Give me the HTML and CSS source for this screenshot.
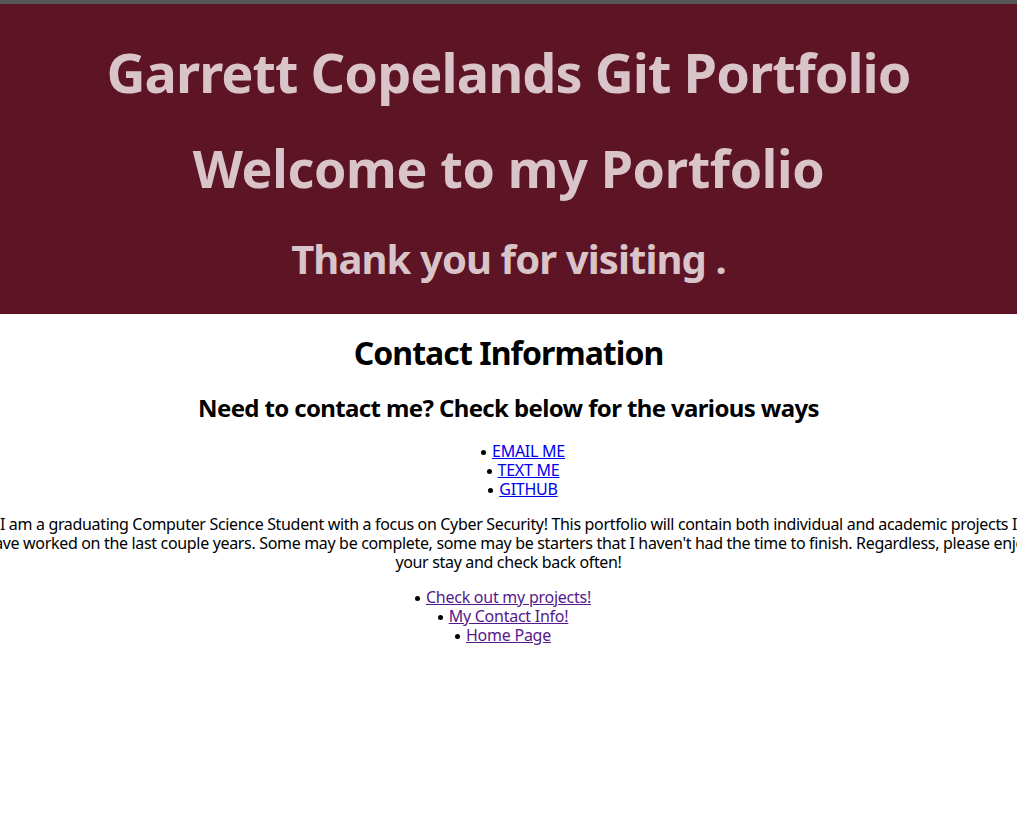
FILE: index.html
```html
<!DOCTYPE html>
<html lang="en">
<head>
<meta charset="utf-8">
<title>Garrett Copelands Git Portfolio</title>
<link rel="stylesheet" href="styles.css">
</head>
<body>
<header class="banner">
  <h1 class="title">Garrett Copelands Git Portfolio</h1>
  <h1 class="welcome">Welcome to my Portfolio</h1>
  <h2 class="thanks">Thank you for visiting .</h2>
</header>
<main class="content">
  <h1 class="section-title">Contact Information</h1>
  <h2 class="section-sub">Need to contact me? Check below for the various ways</h2>
  <ul class="bullets contact-list">
    <li><span class="item"><a class="link" href="#email">EMAIL ME</a></span></li>
    <li><span class="item"><a class="link" href="#text">TEXT ME</a></span></li>
    <li><span class="item"><a class="link" href="#github">GITHUB</a></span></li>
  </ul>
  <p class="about">I am a graduating Computer Science Student with a focus on Cyber Security! This portfolio will contain both individual and academic projects I have worked on the last couple years. Some may be complete, some may be starters that I haven't had the time to finish. Regardless, please enjoy your stay and check back often!</p>
  <ul class="bullets nav-list">
    <li><span class="item"><a class="link visited" href="#projects">Check out my projects!</a></span></li>
    <li><span class="item"><a class="link visited" href="#contact">My Contact Info!</a></span></li>
    <li><span class="item"><a class="link visited" href="#home">Home Page</a></span></li>
  </ul>
</main>
</body>
</html>
```

FILE: styles.css
```css
html, body {
  margin: 0;
  padding: 0;
  background: #ffffff;
}
body {
  font-family: "Noto Sans", "Open Sans", sans-serif;
  color: #000000;
  text-align: center;
  overflow-x: hidden;
}
.banner {
  background: #5d1425;
  border-top: 4px solid #575757;
  color: #d9c4c9;
  padding: 36px 0 31px;
}
.title, .welcome, .thanks {
  margin: 0;
  font-weight: 700;
}
.title {
  font-size: 54px;
  line-height: 64px;
  letter-spacing: -0.95px;
}
.welcome {
  font-size: 52px;
  line-height: 64px;
  margin-top: 32px;
  letter-spacing: -0.35px;
}
.thanks {
  font-size: 40px;
  line-height: 48px;
  margin-top: 35px;
  letter-spacing: -0.9px;
}
.content {
  padding-top: 19px;
  font-size: 16px;
  line-height: 19px;
  letter-spacing: -0.25px;
}
.section-title {
  margin: 0;
  font-size: 32px;
  line-height: 40px;
  font-weight: 700;
  letter-spacing: -0.95px;
}
.section-sub {
  margin: 20px 0 0;
  font-size: 24px;
  line-height: 30px;
  font-weight: 700;
  letter-spacing: -0.63px;
}
.bullets {
  list-style: none;
}
.item {
  position: relative;
}
.item::before {
  content: "";
  position: absolute;
  right: 100%;
  top: 10px;
  width: 5px;
  height: 5px;
  margin-right: 6px;
  border-radius: 50%;
  background: #000000;
}
.contact-list {
  margin: 19px 0 0;
  padding-left: 40px;
}
.about {
  margin: 16px -17.5px 0;
  letter-spacing: -0.33px;
}
.nav-list {
  margin: 16px 0 0;
  padding: 0;
}
.link {
  color: #0000ee;
  text-decoration: underline;
}
.link.visited {
  color: #551a8b;
}
```
